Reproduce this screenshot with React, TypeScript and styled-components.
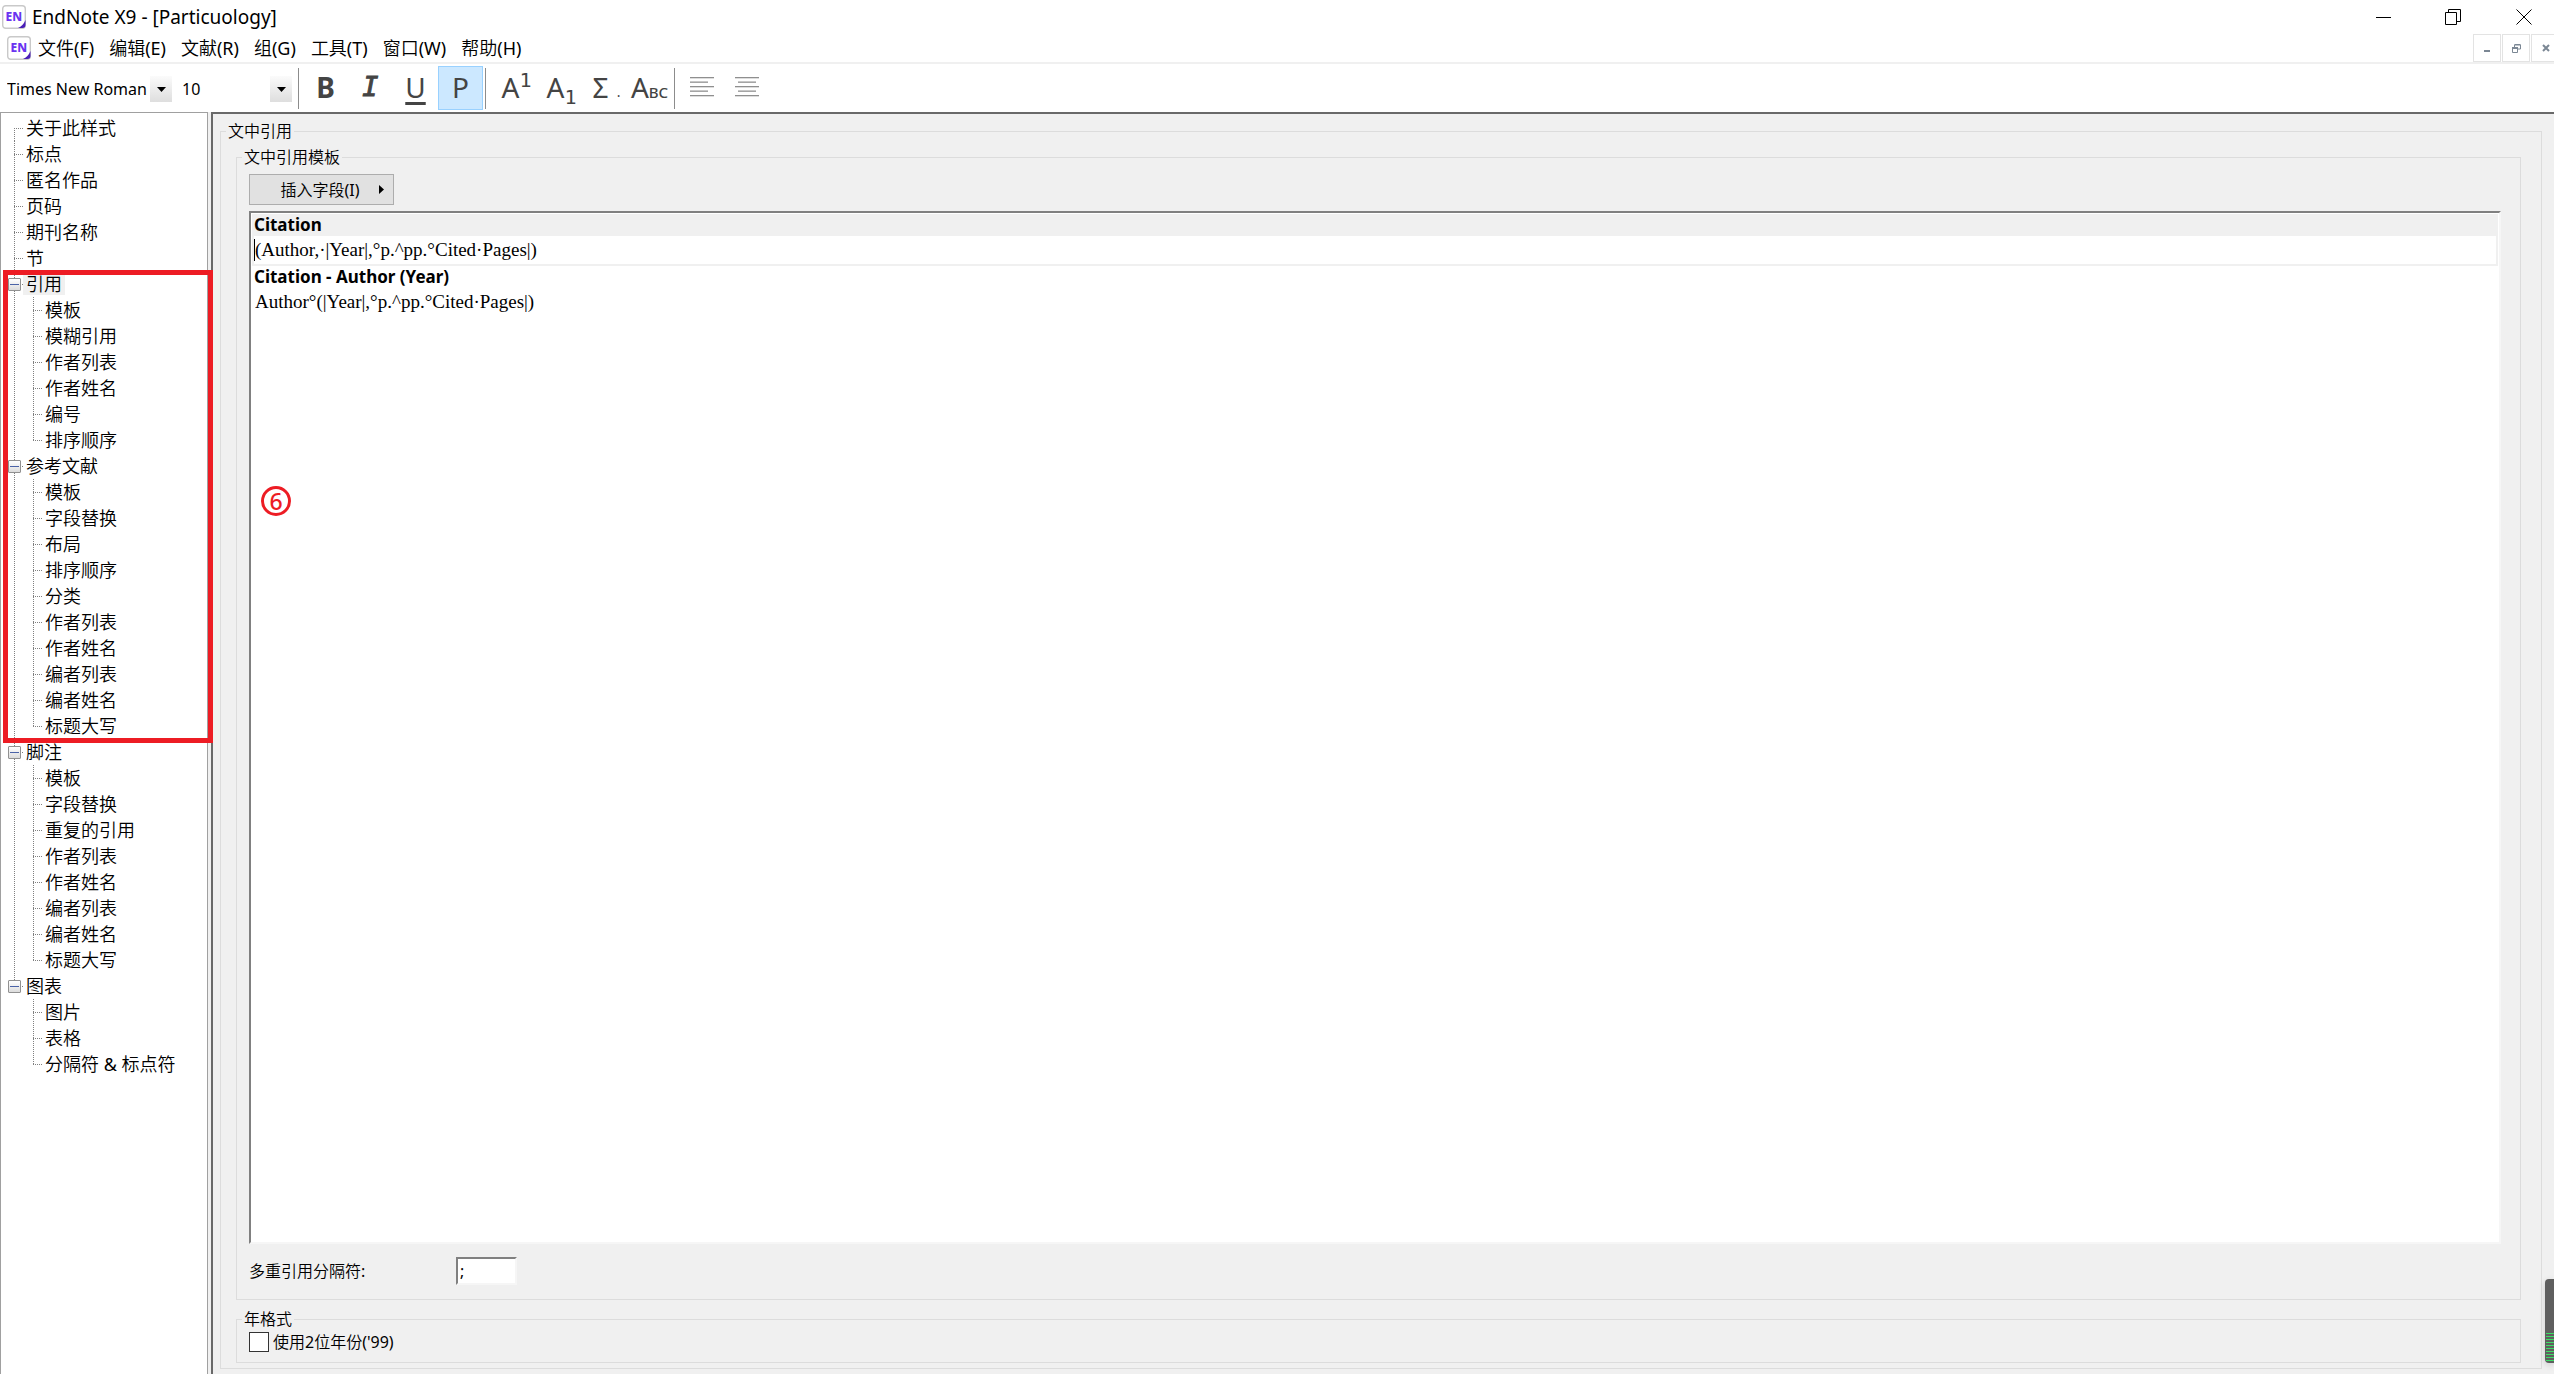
import React, { useState } from "react";
import styled, { createGlobalStyle, css } from "styled-components";

const cjk = `"Noto Sans CJK SC DemiLight", "Noto Sans CJK SC"`;
const ui = `"Noto Sans", ${cjk}, sans-serif`;
const serif = `"Liberation Serif", serif`;

const GlobalStyle = createGlobalStyle`
  *, *::before, *::after { box-sizing: border-box; }
  body { margin: 0; background: #fff; color: #000; font: 18px/26px ${ui}; }
  button, input, select { font: inherit; color: inherit; margin: 0; }
`;

const Window = styled.div`
  position: relative;
  display: flex;
  flex-direction: column;
  min-height: 100vh;
  overflow: hidden;
`;

const plainButton = css`
  border: 0;
  padding: 0;
  background: none;
  display: flex;
  align-items: center;
  justify-content: center;
`;

const TitleBar = styled.header`
  display: flex;
  align-items: center;
  height: 34px;
  padding-left: 2px;
  gap: 6px;
`;

const Title = styled.h1`
  margin: 0;
  flex: 1;
  font-size: 19px;
  font-weight: 400;
`;

const CaptionButton = styled.button`
  ${plainButton}
  width: 70px;
  height: 34px;
  &:first-of-type { width: 58px; }
  &:last-child { width: 60px; }
`;

const MenuBar = styled.nav`
  display: flex;
  align-items: center;
  height: 30px;
  padding-left: 7px;
  gap: 7px;
  border-bottom: 2px solid #f0f0f0;
`;

const MenuItems = styled.div`
  display: flex;
  flex: 1;
  gap: 15px;
`;

const MenuButton = styled.button`
  ${plainButton}
`;

const ChildControls = styled.div`
  display: flex;
  gap: 1px;
`;

const ChildButton = styled.button`
  ${plainButton}
  width: 28px;
  height: 28px;
  border: 1px solid #e3e3e3;
  &:last-child { width: 23px; border-right: 0; padding-left: 5px; }
`;

const Toolbar = styled.div`
  display: flex;
  align-items: center;
  height: 48px;
  font-size: 16px;
`;

const Combo = styled.label<{ $width: number; $inset: number }>`
  display: flex;
  align-items: center;
  width: ${(p) => p.$width}px;
  height: 26px;
  margin-top: 2px;
  select { padding: 0 0 0 ${(p) => p.$inset}px; }
`;

const ComboSelect = styled.select`
  appearance: none;
  flex: 1;
  min-width: 0;
  height: 26px;
  border: 0;
  background: #fff;
`;

const ComboArrow = styled.span`
  display: flex;
  align-items: center;
  justify-content: center;
  width: 22px;
  height: 26px;
  background: linear-gradient(#fbfbfb, #dedede);
`;

const Separator = styled.span<{ $before: number; $after: number }>`
  width: 1px;
  height: 41px;
  margin: 0 ${(p) => p.$after}px 0 ${(p) => p.$before}px;
  background: #8c8c8c;
`;

const ToolButton = styled.button<{ $active?: boolean }>`
  ${plainButton}
  width: 45px;
  height: 44px;
  padding-bottom: 2px;
  color: #444;
  font: 28px/36px "Noto Sans", sans-serif;
  border: 1px solid ${(p) => (p.$active ? "#99d1ff" : "transparent")};
  background: ${(p) => (p.$active ? "#cce8ff" : "transparent")};
  b { font-weight: 700; }
  i { font: italic 27px/36px "DejaVu Sans Mono", monospace; -webkit-text-stroke: 1px #444; }
  u { text-decoration-thickness: 3px; text-underline-offset: 4px; }
  sup, sub { font: 20px/20px "DejaVu Sans Mono", monospace; }
  sup { align-self: flex-start; margin-top: 3px; }
  sub { align-self: flex-end; }
  small { font-size: 15px; line-height: 18px; margin: 9px 4px 0 0; font-weight: 500; }
  em { font: 14px/18px "Noto Sans", sans-serif; margin: 10px 0 0 8px; }
`;

const Body = styled.div`
  display: flex;
  flex: 1;
  background: #f0f0f0;
`;

const Sidebar = styled.aside`
  position: relative;
  flex: none;
  width: 208px;
  margin-right: 3px;
  padding-top: 2px;
  border: solid #a0a0a0;
  border-width: 1px 1px 0 1px;
  background: #fff;
`;

const dots = (dir: string) =>
  `repeating-linear-gradient(${dir}, #808080 0 1px, transparent 1px 2px)`;

const Tree = styled.ul`
  list-style: none;
  margin: 0;
  padding: 0 0 0 13px;
`;

const Branch = styled.ul`
  list-style: none;
  margin: 0;
  padding: 0 0 0 19px;
`;

const Node = styled.li`
  position: relative;
  &::before {
    content: "";
    position: absolute;
    left: 0;
    top: 0;
    bottom: 0;
    width: 1px;
    background: ${dots("to bottom")};
  }
  &:last-child::before { bottom: auto; height: 14px; }
  ${Tree} > &:first-child::before { top: 13px; }
`;

const NodeRow = styled.div`
  display: flex;
  align-items: center;
  height: 26px;
  &::before {
    content: "";
    width: 9px;
    height: 1px;
    background: ${dots("to right")};
  }
`;

const NodeLabel = styled.button<{ $selected?: boolean }>`
  ${plainButton}
  height: 22px;
  padding: 0 3px;
  white-space: nowrap;
  background: ${(p) => (p.$selected ? "#f0f0f0" : "none")};
`;

const Toggle = styled.button`
  position: absolute;
  left: -6px;
  top: 7px;
  width: 13px;
  height: 13px;
  padding: 0;
  border: 1px solid #919191;
  border-radius: 1px;
  background: linear-gradient(#4b63a7, #4b63a7) center / 9px 1px no-repeat,
    linear-gradient(#fff, #dcdcdc);
`;

const RedFrame = styled.div`
  position: absolute;
  left: 2px;
  top: 157px;
  width: 210px;
  height: 473px;
  border: 5px solid #ed1c24;
  z-index: 1;
  pointer-events: none;
`;

const Panel = styled.main`
  display: flex;
  flex: 1;
  min-width: 0;
  padding: 6px 12px 5px 7px;
  border: solid #696969;
  border-width: 2px 0 0 2px;
  font: 16px/22px ${ui};
`;

const Group = styled.fieldset<{ $grow?: boolean; $pad: string }>`
  display: flex;
  flex-direction: column;
  flex: ${(p) => (p.$grow ? "1" : "none")};
  min-width: 0;
  margin: 0;
  padding: ${(p) => p.$pad};
  border: 1px solid #dcdcdc;
`;

const Legend = styled.legend<{ $inset?: boolean }>`
  margin-left: ${(p) => (p.$inset ? -7 : -10)}px;
  padding: 0 2px;
`;

const InsertButton = styled.button`
  ${plainButton}
  align-self: flex-start;
  gap: 19px;
  width: 145px;
  height: 31px;
  padding-left: 21px;
  border: 1px solid #adadad;
  background: #e1e1e1;
`;

const Editor = styled.div`
  position: relative;
  flex: 1;
  margin-top: 6px;
  padding: 1px;
  border: 2px solid;
  border-color: #808080 #f6f6f6 #f6f6f6 #808080;
  background: #fff;
`;

const Template = styled.label<{ $focused?: boolean }>`
  display: block;
  height: 52px;
  padding: 0 2px;
  background: ${(p) => (p.$focused ? "#f0f0f0" : "#fff")};
`;

const TemplateName = styled.span`
  display: block;
  height: 22px;
  font: 700 17px/22px ${ui};
`;

const Field = styled.span`
  display: flex;
  align-items: center;
  height: 28px;
  background: #fff;
`;

const Caret = styled.span<{ $visible?: boolean }>`
  width: 1px;
  height: 22px;
  background: ${(p) => (p.$visible ? "#000" : "transparent")};
`;

const FieldInput = styled.input`
  flex: 1;
  min-width: 0;
  height: 26px;
  padding: 0;
  border: 0;
  outline: 0;
  background: none;
  font: 19px/26px ${serif};
`;

const Marker = styled.span`
  position: absolute;
  left: 10px;
  top: 273px;
  display: flex;
  align-items: center;
  justify-content: center;
  width: 30px;
  height: 30px;
  border: 3px solid #ed1c24;
  border-radius: 50%;
  color: #ed1c24;
  font: 500 23px/24px "Noto Sans", sans-serif;
`;

const SeparatorRow = styled.div`
  display: flex;
  align-items: center;
  margin-top: 13px;
  label { width: 207px; }
`;

const SeparatorInput = styled.input`
  width: 61px;
  height: 28px;
  padding: 0 2px;
  border: 2px solid;
  border-color: #808080 #f6f6f6 #f6f6f6 #808080;
  background: #fff;
`;

const CheckRow = styled.label`
  display: flex;
  align-items: center;
  gap: 4px;
  height: 22px;
`;

const CheckBox = styled.input`
  appearance: none;
  width: 20px;
  height: 20px;
  border: 1px solid #333;
  background: #fff;
`;

const Meter = styled.div`
  position: absolute;
  right: 0;
  bottom: 11px;
  width: 9px;
  height: 84px;
  padding: 54px 0 2px 1px;
  border-radius: 4px 0 0 4px;
  background: #5f5f5f;
  box-shadow: 0 2px 6px rgba(0, 0, 0, 0.15);
  &::after {
    content: "";
    display: block;
    height: 28px;
    background: repeating-linear-gradient(#3ddc66 0 1px, transparent 1px 3px);
  }
`;

const Logo = () => (
  <svg width="24" height="24" viewBox="0 0 24 24" aria-hidden="true">
    <rect x="0.7" y="0.7" width="22.6" height="22.6" rx="3" fill="#fff" stroke="#c9c9c9" strokeWidth="1.4" />
    <path d="M23.5 15v5q0 3-3 3H16q5-2 7.500-8z" fill="#4a1fb8" />
    <text x="3.500" y="16" fontFamily="Noto Sans, sans-serif" fontWeight="800" fontSize="12" fill="#6a35f0">EN</text>
  </svg>
);

const DownArrow = () => (
  <svg width="9" height="5" viewBox="0 0 9 5" aria-hidden="true">
    <path d="M0 0h9L4.500 5z" fill="#000" />
  </svg>
);

const AlignIcon = ({ rows }: { rows: [number, number][] }) => (
  <svg width="24" height="22" viewBox="0 0 24 22" aria-hidden="true">
    {rows.map(([x, w], i) => (
      <rect key={i} x={x} y={1 + i * 4.500} width={w} height="1.300" fill="#8f8f8f" />
    ))}
  </svg>
);

const menus = ["文件(F)", "编辑(E)", "文献(R)", "组(G)", "工具(T)", "窗口(W)", "帮助(H)"];

type TreeItem = { label: string; children?: string[] };

const tree: TreeItem[] = [
  { label: "关于此样式" },
  { label: "标点" },
  { label: "匿名作品" },
  { label: "页码" },
  { label: "期刊名称" },
  { label: "节" },
  { label: "引用", children: ["模板", "模糊引用", "作者列表", "作者姓名", "编号", "排序顺序"] },
  {
    label: "参考文献",
    children: ["模板", "字段替换", "布局", "排序顺序", "分类", "作者列表", "作者姓名", "编者列表", "编者姓名", "标题大写"],
  },
  {
    label: "脚注",
    children: ["模板", "字段替换", "重复的引用", "作者列表", "作者姓名", "编者列表", "编者姓名", "标题大写"],
  },
  { label: "图表", children: ["图片", "表格", "分隔符 & 标点符"] },
];

const TreeNode = ({ item }: { item: TreeItem }) => {
  const [open, setOpen] = useState(true);
  return (
    <Node>
      <NodeRow>
        {item.children && <Toggle aria-label={item.label} aria-expanded={open} onClick={() => setOpen(!open)} />}
        <NodeLabel $selected={item.label === "引用"}>{item.label}</NodeLabel>
      </NodeRow>
      {item.children && open && (
        <Branch>
          {item.children.map((label) => (
            <Node key={label}>
              <NodeRow>
                <NodeLabel>{label}</NodeLabel>
              </NodeRow>
            </Node>
          ))}
        </Branch>
      )}
    </Node>
  );
};

const YearWrap = styled.div`
  display: flex;
  flex-direction: column;
  margin-top: 8px;
`;

export default function App() {
  return (
    <Window>
      <GlobalStyle />
      <TitleBar>
        <Logo />
        <Title>EndNote X9 - [Particuology]</Title>
        <CaptionButton aria-label="最小化">
          <svg width="15" height="16" viewBox="0 0 15 16"><path d="M0 8.500h15" stroke="#000" /></svg>
        </CaptionButton>
        <CaptionButton aria-label="还原">
          <svg width="16" height="16" viewBox="0 0 16 16" fill="none" stroke="#000">
            <path d="M0.500 3.500h11v12h-11zM3.500 3.500v-3h12v12h-4" />
          </svg>
        </CaptionButton>
        <CaptionButton aria-label="关闭">
          <svg width="16" height="16" viewBox="0 0 16 16" stroke="#000"><path d="M0.500 0.500l15 15M15.500 0.500l-15 15" /></svg>
        </CaptionButton>
      </TitleBar>

      <MenuBar>
        <Logo />
        <MenuItems>
          {menus.map((m) => (
            <MenuButton key={m}>{m}</MenuButton>
          ))}
        </MenuItems>
        <ChildControls>
          <ChildButton aria-label="最小化窗口">
            <svg width="8" height="8" viewBox="0 0 8 8"><path d="M1 6h6v2H1z" fill="#7b8794" /></svg>
          </ChildButton>
          <ChildButton aria-label="还原窗口">
            <svg width="9" height="9" viewBox="0 0 9 9" fill="none" stroke="#7b8794">
              <path d="M2.500 3V1h6v4H6M2.500 0.500h6M0.500 4v4.500h5V4M0 4.500h6M0 3.500h6" />
            </svg>
          </ChildButton>
          <ChildButton aria-label="关闭窗口">
            <svg width="8" height="8" viewBox="0 0 8 8" stroke="#7b8794" strokeWidth="2"><path d="M1 1l6 6M7 1L1 7" /></svg>
          </ChildButton>
        </ChildControls>
      </MenuBar>

      <Toolbar>
        <Combo $width={172} $inset={7}>
          <ComboSelect aria-label="字体"><option>Times New Roman</option></ComboSelect>
          <ComboArrow><DownArrow /></ComboArrow>
        </Combo>
        <Combo $width={120} $inset={10}>
          <ComboSelect aria-label="字号"><option>10</option></ComboSelect>
          <ComboArrow><DownArrow /></ComboArrow>
        </Combo>
        <Separator $before={6} $after={4} />
        <ToolButton><b>B</b></ToolButton>
        <ToolButton><i>I</i></ToolButton>
        <ToolButton><u>U</u></ToolButton>
        <ToolButton $active>P</ToolButton>
        <Separator $before={2} $after={8} />
        <ToolButton>A<sup>1</sup></ToolButton>
        <ToolButton>A<sub>1</sub></ToolButton>
        <ToolButton>Σ<em>.</em></ToolButton>
        <ToolButton>A<small>BC</small></ToolButton>
        <Separator $before={0} $after={4} />
        <ToolButton aria-label="左对齐">
          <AlignIcon rows={[[0, 24], [0, 18], [0, 24], [0, 18], [0, 24]]} />
        </ToolButton>
        <ToolButton aria-label="居中">
          <AlignIcon rows={[[0, 24], [3, 18], [0, 24], [3, 18], [0, 24]]} />
        </ToolButton>
      </Toolbar>

      <Body>
        <Sidebar>
          <Tree>
            {tree.map((item) => (
              <TreeNode key={item.label} item={item} />
            ))}
          </Tree>
          <RedFrame />
        </Sidebar>

        <Panel>
          <Group $grow $pad="4px 20px 5px 15px">
            <Legend>文中引用</Legend>
            <Group $grow $pad="6px 19px 14px 12px">
              <Legend $inset>文中引用模板</Legend>
              <InsertButton>
                插入字段(I)
                <svg width="5" height="9" viewBox="0 0 5 9" aria-hidden="true"><path d="M0 0v9l5-4.500z" /></svg>
              </InsertButton>
              <Editor>
                <Template $focused>
                  <TemplateName>Citation</TemplateName>
                  <Field>
                    <Caret $visible />
                    <FieldInput defaultValue="(Author,·|Year|,°p.^pp.°Cited·Pages|)" />
                  </Field>
                </Template>
                <Template>
                  <TemplateName>Citation - Author (Year)</TemplateName>
                  <Field>
                    <Caret />
                    <FieldInput defaultValue="Author°(|Year|,°p.^pp.°Cited·Pages|)" />
                  </Field>
                </Template>
                <Marker>6</Marker>
              </Editor>
              <SeparatorRow>
                <label htmlFor="multi-separator">多重引用分隔符:</label>
                <SeparatorInput id="multi-separator" defaultValue=";" />
              </SeparatorRow>
            </Group>
            <YearWrap>
              <Group $pad="1px 12px 9px 12px">
                <Legend $inset>年格式</Legend>
                <CheckRow>
                  <CheckBox type="checkbox" />
                  使用2位年份('99)
                </CheckRow>
              </Group>
            </YearWrap>
          </Group>
        </Panel>
      </Body>
      <Meter />
    </Window>
  );
}
